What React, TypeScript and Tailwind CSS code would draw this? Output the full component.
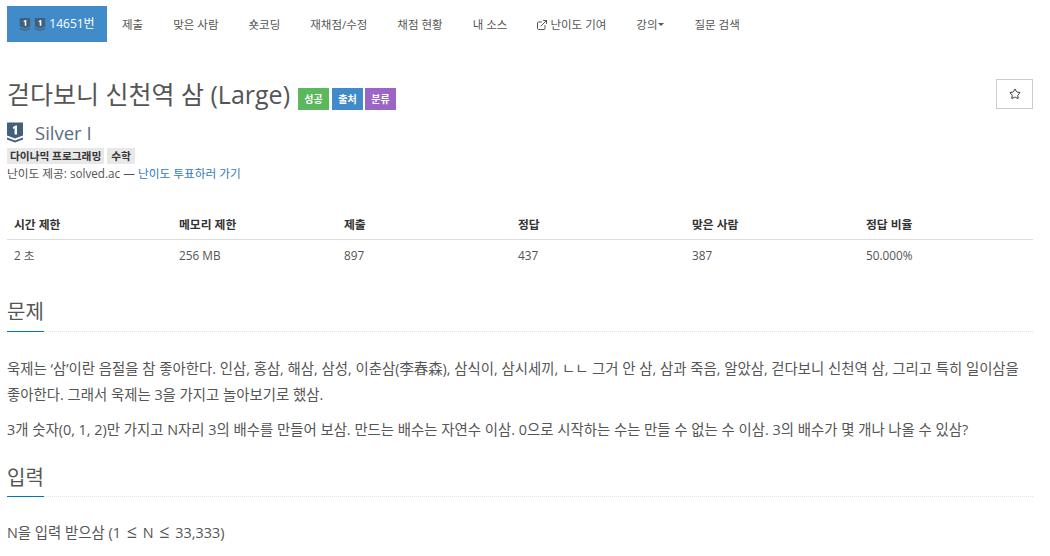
import React from 'react'
import { ExternalLink, Star } from 'lucide-react'

const navItems = ['제출', '맞은 사람', '숏코딩', '재채점/수정', '채점 현황', '내 소스']

const columns = [
  { head: '시간 제한', value: '2 초', width: 'w-[165px]' },
  { head: '메모리 제한', value: '256 MB', width: 'w-[165px]' },
  { head: '제출', value: '897', width: 'w-[174px]' },
  { head: '정답', value: '437', width: 'w-[174px]' },
  { head: '맞은 사람', value: '387', width: 'w-[174px]' },
  { head: '정답 비율', value: '50.000%', width: 'w-[174px]' },
]

function TierBadge({ className }: { className: string }) {
  return (
    <svg viewBox="0 0 16 20" className={className}>
      <path d="M0 0H16V13L8 16L0 13Z" fill="#435f7a" />
      <path d="M0 15L8 18L16 15V17L8 20L0 17Z" fill="#435f7a" />
      <path d="M6 4.5L8.6 3H10V12H7.6V5.8L6 6.6Z" fill="#fff" />
    </svg>
  )
}

function SectionTitle({ children, pad }: { children: React.ReactNode; pad: string }) {
  return (
    <div className="flex border-b border-dotted border-[#dde3ee]">
      <h2 className={`-mb-px border-b border-[#0076c0] ${pad} text-[20px] leading-[26px] font-normal text-[#555]`}>
        {children}
      </h2>
    </div>
  )
}

export default function App() {
  return (
    <div className="w-[1050px] h-[556px] overflow-hidden bg-white px-[7px] pt-[6px] font-['Open_Sans','Noto_Sans_CJK_KR',sans-serif] text-[14px] text-[#555]">
      {/* nav tabs */}
      <ul className="flex h-9 items-center text-[11.5px]">
        <li className="flex h-9 w-[100px] items-center justify-center gap-[3px] bg-[#428bca] text-[12px] text-white">
          <TierBadge className="h-[13px] w-[12px]" />
          <TierBadge className="h-[13px] w-[12px]" />
          <span>14651번</span>
        </li>
        {navItems.map((item) => (
          <li key={item} className="px-[15px] pt-px whitespace-nowrap">
            {item}
          </li>
        ))}
        <li className="flex items-center gap-[2px] pr-[15px] pl-[14px] pt-px">
          <ExternalLink size={12} />
          난이도 기여
        </li>
        <li className="flex items-center gap-[1px] px-[15px] pt-px">
          강의
          <span className="h-0 w-0 border-x-[3px] border-t-[3px] border-x-transparent border-t-[#555]" />
        </li>
        <li className="px-[15px] pt-px">질문 검색</li>
      </ul>

      {/* title */}
      <div className="mt-[34px] flex h-[36px] items-center">
        <h1 className="text-[25px] leading-9 font-normal text-[#555]">걷다보니 신천역 삼 (Large)</h1>
        <div className="mt-[10px] ml-[8px] flex gap-[3px] text-[10px] font-bold text-white">
          <span className="flex h-[22px] w-[31px] items-center justify-center bg-[#5cb85c]">성공</span>
          <span className="flex h-[22px] w-[31px] items-center justify-center bg-[#428bca]">출처</span>
          <span className="-ml-px flex h-[22px] w-[31px] items-center justify-center bg-[#9b65c8]">분류</span>
        </div>
        <button className="mr-[10px] ml-auto flex h-[30px] w-[37px] items-center justify-center border border-[#ccc] text-[#333]">
          <Star size={12} strokeWidth={2} />
        </button>
      </div>

      {/* tier + tags */}
      <div className="mt-[9px] flex h-[23px] items-center gap-[12px]">
        <TierBadge className="h-[21px] w-4" />
        <span className="text-[18.5px] text-[#5b6b7f]">Silver I</span>
      </div>
      <div className="mt-[4px] flex gap-[3px] text-[10.7px] font-semibold text-[#333]">
        <span className="flex h-4 items-center bg-[#e8e8e8] px-[3px]">다이나믹 프로그래밍</span>
        <span className="flex h-4 items-center bg-[#e8e8e8] px-[4px]">수학</span>
      </div>
      <p className="mt-[1px] text-[11.7px] leading-[16px]">
        난이도 제공: solved.ac — <span className="text-[#337ab7]">난이도 투표하러 가기</span>
      </p>

      {/* stats table */}
      <div className="mt-[31px] mr-[10px] flex text-[11.8px]">
        {columns.map((col) => (
          <div key={col.head} className={col.width}>
            <div className="flex h-[28px] items-center border-b border-[#ddd] pb-px pl-[7px] font-bold text-[#333]">
              {col.head}
            </div>
            <div className="flex h-[32px] items-center pl-[7px]">{col.value}</div>
          </div>
        ))}
      </div>

      {/* problem */}
      <div className="mt-[27px] mr-[10px]">
        <SectionTitle pad="pb-[6px]">문제</SectionTitle>
        <div className="mt-[24px] text-[14.4px] leading-[26px]">
          <p>
            욱제는 ‘삼’이란 음절을 참 좋아한다. 인삼, 홍삼, 해삼, 삼성, 이춘삼(李春森), 삼식이, 삼시세끼, ㄴㄴ 그거 안 삼, 삼과 죽음, 알았삼, 걷다보니 신천역 삼, 그리고 특히 일이삼을 좋아한다. 그래서 욱제는 3을 가지고 놀아보기로 했삼.
          </p>
          <p className="mt-[9px]">
            3개 숫자(0, 1, 2)만 가지고 N자리 3의 배수를 만들어 보삼. 만드는 배수는 자연수 이삼. 0으로 시작하는 수는 만들 수 없는 수 이삼. 3의 배수가 몇 개나 나올 수 있삼?
          </p>
        </div>
      </div>

      {/* input */}
      <div className="mt-[22px] mr-[10px]">
        <SectionTitle pad="pb-[5px]">입력</SectionTitle>
        <p className="mt-[23px] text-[14.4px] leading-[26px]">
          N을 입력 받으삼 (1 <span className="mx-[2px] text-[18px] leading-none">≤</span> N <span className="mx-[2px] text-[18px] leading-none">≤</span> 33,333)
        </p>
      </div>
    </div>
  )
}
